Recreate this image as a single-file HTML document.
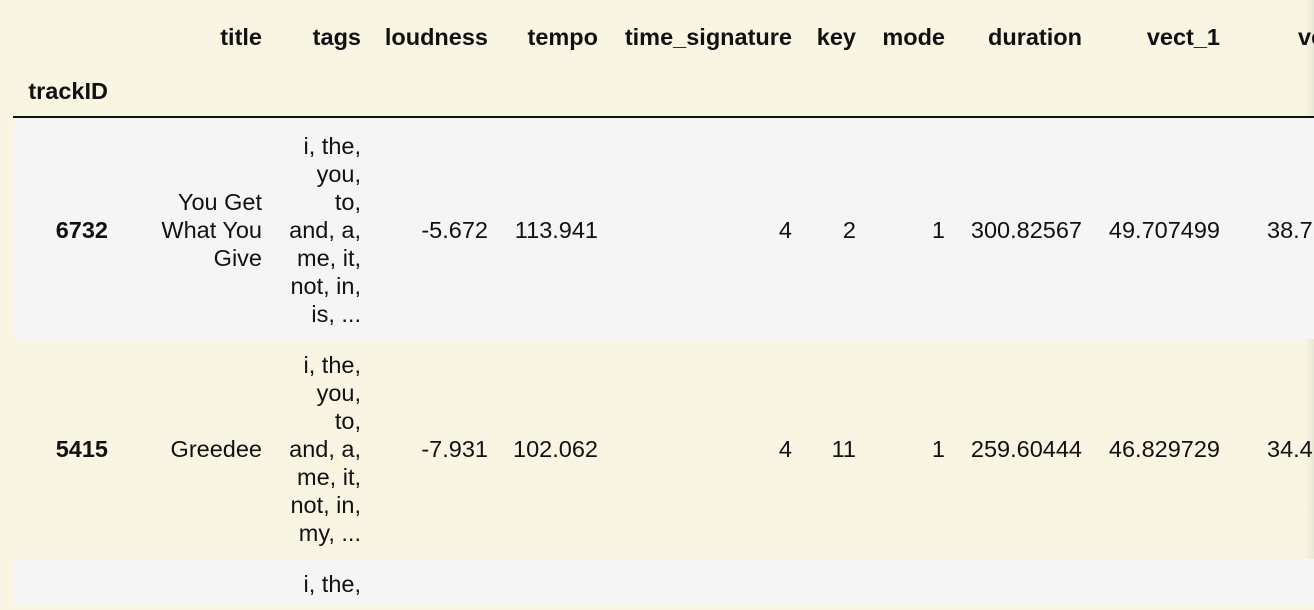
<!DOCTYPE html>
<html><head><meta charset="utf-8"><style>
html,body{margin:0;padding:0;}
body{width:1314px;height:610px;background:#f8f5e3;position:relative;overflow:hidden;font-family:"Liberation Sans",Arial,sans-serif;font-size:23.5px;color:#111;}
.t{position:absolute;white-space:nowrap;text-align:right;line-height:28px;height:28px;}
.b{font-weight:bold;}
.row{position:absolute;left:13px;right:0;background:#f5f5f5;}
.line{position:absolute;left:13px;right:0;top:116px;height:2px;background:#111;}
.sh{position:absolute;right:0;top:0;width:9px;height:560px;background:linear-gradient(to right,rgba(0,0,0,0),rgba(0,0,0,0.06));}
</style></head><body>
<div class="sh"></div>
<div class="row" style="top:118px;height:221px"></div>
<div class="row" style="top:559px;height:46px"></div>
<div class="line"></div>
<div id="c"></div>
<script>
var out=[];
function T(r,y,txt,b){out.push('<div class="t'+(b?' b':'')+'" style="right:'+(1314-r)+'px;top:'+(y-14)+'px">'+txt+'</div>');}
function L(x,y,txt,b){out.push('<div class="t'+(b?' b':'')+'" style="left:'+x+'px;top:'+(y-14)+'px;text-align:left">'+txt+'</div>');}
var h=[[262,'title'],[361,'tags'],[488,'loudness'],[598,'tempo'],[792,'time_signature'],[856,'key'],[945,'mode'],[1082,'duration'],[1220,'vect_1']];
h.forEach(function(a){T(a[0],37,a[1],1);});
L(1298,37,'vect_2',1);
T(108,91,'trackID',1);
function row(c,id,title,tags,v){
 T(108,c,id,1);
 var n=title.length;title.forEach(function(s,i){T(262,c+(i-(n-1)/2)*28,s);});
 var m=tags.length;tags.forEach(function(s,i){T(361,c+(i-(m-1)/2)*28,s);});
 var rs=[488,598,792,856,945,1082,1220];
 v.forEach(function(s,i){T(rs[i],c,s);});
}
row(230,'6732',['You Get','What You','Give'],['i, the,','you,','to,','and, a,','me, it,','not, in,','is, ...'],['-5.672','113.941','4','2','1','300.82567','49.707499']);
L(1267,230,'38.7');
row(449,'5415',['Greedee'],['i, the,','you,','to,','and, a,','me, it,','not, in,','my, ...'],['-7.931','102.062','4','11','1','259.60444','46.829729']);
L(1267,449,'34.4');
T(361,584,'i, the,');
document.getElementById('c').innerHTML=out.join('');
</script>
</body></html>
